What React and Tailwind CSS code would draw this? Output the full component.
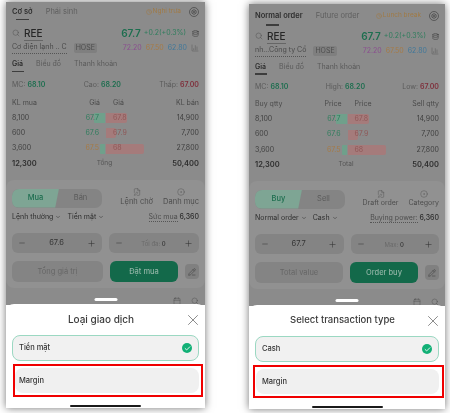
import React from "react";
import { Search, Database, ChartColumn, X, Check, Clock, ChevronDown, Minus, Plus, FilePen, CircleDot, PencilLine, Calendar } from "lucide-react";

const font = { fontFamily: "Inter, 'Noto Sans', sans-serif" };

const vi = {
  wrap: "mt-[2px] w-[199px] h-[406px]",
  top: "h-[303px]",
  head: "h-[17px] pb-[2px]",
  symbol: "mt-[5px]",
  bookGap: "mt-[8px]",
  tabs: ["Cơ sở", "Phái sinh"],
  underline: "ml-[10px] w-[13px]",
  session: "Nghỉ trưa",
  name: "Cơ điện lạnh .. C",
  high: "Cao:",
  low: "Thấp:",
  buyQty: "KL mua",
  price: "Giá",
  sellQty: "KL bán",
  total: "Tổng",
  buy: "Mua",
  sell: "Bán",
  draft: "Lệnh chờ",
  category: "Danh mục",
  actions: "text-[7.5px]",
  orderType: "Lệnh thường",
  cash: "Tiền mặt",
  power: "Sức mua",
  priceValue: "67.6",
  max: "Tối đa:",
  totalValue: "Tổng giá trị",
  submit: "Đặt mua",
  sheetTitle: "Loại giao dịch",
  title: "text-[10px]",
  redBox: "ml-[1px] mr-[-4px] pl-0 pr-[2px]",
  marginPad: "px-[4px]",
};

const en = {
  wrap: "mt-[4px] ml-[44px] w-[196px] h-[405px]",
  top: "h-[302px]",
  head: "h-[21px] pb-[3px]",
  symbol: "mt-[3px]",
  bookGap: "mt-[7px]",
  tabs: ["Normal order", "Future order"],
  underline: "ml-[17px] w-[13px]",
  session: "Lunch break",
  name: "nh...Công ty Cổ",
  high: "High:",
  low: "Low:",
  buyQty: "Buy qtty",
  price: "Price",
  sellQty: "Sell qtty",
  total: "Total",
  buy: "Buy",
  sell: "Sell",
  draft: "Draft order",
  category: "Category",
  actions: "text-[7px]",
  orderType: "Normal order",
  cash: "Cash",
  power: "Buying power:",
  priceValue: "67.7",
  max: "Max:",
  totalValue: "Total value",
  submit: "Order buy",
  sheetTitle: "Select transaction type",
  title: "text-[9.5px]",
  redBox: "ml-[-2px] mr-[-5px] pl-[1px] pr-[3px]",
  marginPad: "px-[6px]",
};

const rows = [
  { buy: "8,100", bid: "67.7", bidBar: 11, ask: "67.8", askBar: 21, sell: "14,900", bidColor: "text-[#2f7d5d]" },
  { buy: "600", bid: "67.6", bidBar: 0, ask: "67.9", askBar: 10, sell: "7,700", bidColor: "text-[#2f7d5d]" },
  { buy: "3,600", bid: "67.5", bidBar: 5, ask: "68", askBar: 38, sell: "27,800", bidColor: "text-[#a67a45]" },
];

function GearRing() {
  return (
    <svg width="10" height="10" viewBox="0 0 10 10" fill="none" stroke="#444444" strokeWidth="0.7">
      <circle cx="5" cy="5" r="4.5" />
      <path d="M5 2.6 7.1 3.8V6.2L5 7.4 2.9 6.2V3.8Z" />
      <circle cx="5" cy="5" r="0.8" />
    </svg>
  );
}

function BookRow({ row }) {
  return (
    <div className="flex h-[15.3px] items-center justify-between px-[6px] text-[7px] text-[#3f3f3f]">
      <span className="w-[40px]">{row.buy}</span>
      <div className="grid w-[80px] grid-cols-2 gap-x-[1px]">
        <div className="relative flex h-[10px] items-center justify-end pr-[6px]">
          <div className="absolute right-0 top-0 h-full rounded-l-[1px] bg-[#6fa08b]" style={{ width: row.bidBar }} />
          <span className={`relative ${row.bidColor}`}>{row.bid}</span>
        </div>
        <div className="relative flex h-[10px] items-center pl-[7px]">
          <div className="absolute left-0 top-0 h-full rounded-r-[2px] bg-[#a57b7b]" style={{ width: row.askBar }} />
          <span className="relative text-[#8f5757]">{row.ask}</span>
        </div>
      </div>
      <span className="w-[40px] text-right">{row.sell}</span>
    </div>
  );
}

function Stepper({ children }) {
  return (
    <div className="flex h-[20px] items-center justify-between rounded-[6px] bg-[#848484] px-[6px] text-[#333333]">
      <Minus size={8} strokeWidth={1.5} />
      {children}
      <Plus size={9} strokeWidth={1.5} />
    </div>
  );
}

function Phone({ t }) {
  return (
    <div className={`flex flex-col overflow-hidden bg-white shadow-[0_0_8px_rgba(0,0,0,0.55)] blur-[0.3px] ${t.wrap}`} style={font}>
      <div className={`relative flex flex-col overflow-hidden bg-[#8b8b8b] ${t.top}`}>
        {/* header tabs */}
        <div className={`flex items-end justify-between px-[6px] ${t.head}`}>
          <div className="flex gap-[13px] text-[7.5px]">
            <span className="font-semibold text-[#2e2e2e]">{t.tabs[0]}</span>
            <span className="text-[#5e5e5e]">{t.tabs[1]}</span>
          </div>
          <div className="flex items-center gap-[8px]">
            <div className="flex items-center gap-[1px] text-[6.5px] text-[#a07a45]">
              <Clock size={6} />
              <span>{t.session}</span>
            </div>
            <GearRing />
          </div>
        </div>
        <div className={`h-[1.5px] bg-[#3d3d3d] ${t.underline}`} />

        {/* symbol */}
        <div className={`flex h-[16px] items-center justify-between px-[6px] ${t.symbol}`}>
          <div className="flex items-center gap-[4px]">
            <Search size={8} strokeWidth={1.3} className="text-[#4a4a4a]" />
            <span className="border-b border-[#666666] text-[10px] font-medium leading-[14px] text-[#262626]">REE</span>
          </div>
          <div className="flex items-center gap-[3px]">
            <span className="text-[10px] font-semibold text-[#1d6e4f]">67.7</span>
            <span className="text-[7px] text-[#2f7d5d]">+0.2(+0.3%)</span>
            <Database size={7} className="ml-[3px] text-[#3f3f3f]" />
          </div>
        </div>
        <div className="mt-[1px] flex h-[12px] items-center justify-between px-[6px]">
          <div className="flex items-center gap-[7px] text-[7px]">
            <span className="border-b border-dotted border-[#555555] text-[#4a4a4a]">{t.name}</span>
            <span className="rounded-[2px] bg-[#7f7f7f] px-[2px] text-[#4d4d4d]">HOSE</span>
          </div>
          <div className="flex items-center gap-[4px] text-[7px]">
            <span className="text-[#8a4f8f]">72.20</span>
            <span className="text-[#a67a45]">67.50</span>
            <span className="text-[#41789a]">62.80</span>
            <ChartColumn size={8} strokeWidth={1} className="text-[#3f3f3f]" />
          </div>
        </div>

        {/* sub tabs */}
        <div className="mt-[4px] flex h-[13px] items-center gap-[13px] px-[6px] text-[7px]">
          <span className="font-semibold text-[#2e2e2e]">Giá</span>
          <span className="text-[#5a5a5a]">Biểu đồ</span>
          <span className="text-[#5a5a5a]">Thanh khoản</span>
        </div>
        <div className="ml-[6px] h-[1.5px] w-[12px] bg-[#3d3d3d]" />

        {/* stats */}
        <div className="mt-[8px] flex h-[10px] items-center justify-between px-[6px] text-[7px] text-[#5a5a5a]">
          <span>MC: <b className="font-semibold text-[#1d6e4f]">68.10</b></span>
          <span>{t.high} <b className="font-semibold text-[#1d6e4f]">68.20</b></span>
          <span>{t.low} <b className="font-semibold text-[#7f2f3b]">67.00</b></span>
        </div>

        {/* order book */}
        <div className={`flex h-[10px] items-center justify-between px-[6px] text-[7px] text-[#4a4a4a] ${t.bookGap}`}>
          <span className="w-[40px]">{t.buyQty}</span>
          <div className="grid w-[80px] grid-cols-2 gap-x-[1px]">
            <span className="pr-[5px] text-right">{t.price}</span>
            <span className="pl-[7px]">{t.price}</span>
          </div>
          <span className="w-[40px] text-right">{t.sellQty}</span>
        </div>
        <div className="mt-[2px] flex flex-col">
          {rows.map((row) => (
            <BookRow key={row.buy} row={row} />
          ))}
        </div>
        <div className="flex h-[15px] items-center justify-between px-[6px] text-[7.5px] font-semibold text-[#2e2e2e]">
          <span>12,300</span>
          <span className="text-[6.5px] font-normal text-[#555555]">{t.total}</span>
          <span>50,400</span>
        </div>

        {/* order form */}
        <div className="mt-[9px] h-[108px] shrink-0 rounded-[8px] bg-[#919191] px-[6px] pt-[8px]">
          <div className="flex h-[20px] items-center justify-between">
            <div className="flex h-[19px] w-[90px] overflow-hidden rounded-[7px] bg-[#848484] text-[7.5px]">
              <div className="flex w-[47px] items-center justify-center bg-[#7ea594] font-medium text-[#1d6e4f] [clip-path:polygon(0_0,100%_0,92%_100%,0_100%)]">
                {t.buy}
              </div>
              <div className="flex flex-1 items-center justify-center text-[#5a5a5a]">{t.sell}</div>
            </div>
            <div className={`flex gap-[10px] text-[#4d4d4d] ${t.actions}`}>
              <div className="flex flex-col items-center">
                <FilePen size={8} strokeWidth={1.2} />
                <span>{t.draft}</span>
              </div>
              <div className="flex flex-col items-center">
                <CircleDot size={8} strokeWidth={1.2} />
                <span>{t.category}</span>
              </div>
            </div>
          </div>
          <div className="mt-[1px] flex h-[16px] items-center justify-between text-[7px] text-[#2e2e2e]">
            <div className="flex items-center gap-[6px]">
              <span className="flex items-center gap-[2px]">{t.orderType}<ChevronDown size={6} /></span>
              <span className="flex items-center gap-[2px]">{t.cash}<ChevronDown size={6} /></span>
            </div>
            <span>
              <span className="border-b border-dotted border-[#555555] text-[#4d4d4d]">{t.power}</span>{" "}
              <b className="font-medium">6,360</b>
            </span>
          </div>
          <div className="mt-[8px] grid grid-cols-2 gap-[7px]">
            <Stepper>
              <span className="text-[7.5px]">{t.priceValue}</span>
            </Stepper>
            <Stepper>
              <span className="text-[6px] text-[#6a6a6a]">
                {t.max} <b className="font-medium text-[#333333]">0</b>
              </span>
            </Stepper>
          </div>
          <div className="mt-[8px] flex items-center gap-[7px]">
            <div className="flex h-[21px] flex-1 items-center justify-center rounded-[6px] bg-[#848484] text-[7.5px] text-[#666666]">
              {t.totalValue}
            </div>
            <div className="flex h-[21px] w-[68px] items-center justify-center rounded-[6px] bg-[#13694a] text-[7.5px] font-medium text-[#8fb3a4]">
              {t.submit}
            </div>
            <div className="flex h-[15px] w-[14px] items-center justify-center rounded-[4px] bg-[#808080]">
              <PencilLine size={8} className="text-[#4a4a4a]" />
            </div>
          </div>
        </div>

        {/* next section just showing above the sheet */}
        <div className="mt-[9px] flex justify-end gap-[10px] px-[6px] text-[#4a4a4a]">
          <Calendar size={8} strokeWidth={1.2} />
          <Search size={8} strokeWidth={1.2} />
        </div>

        <div className="absolute bottom-[4px] left-1/2 h-[3px] w-[23px] -translate-x-1/2 rounded-full bg-white" />
      </div>

      {/* bottom sheet */}
      <div className="relative -mt-[1px] flex flex-1 flex-col rounded-t-[8px] bg-white px-[6px]">
        <div className={`flex h-[31px] items-center justify-center pr-[9px] font-medium text-[#3a3a3a] ${t.title}`}>
          {t.sheetTitle}
        </div>
        <X size={18} strokeWidth={0.9} className="absolute right-[3.5px] top-[7px] text-[#555555]" />
        <div className="flex h-[26px] items-center justify-between rounded-[8px] border border-[#9bd8c2] bg-[#f1f1f1] px-[6px] text-[7.5px] font-medium text-[#333333]">
          <span>{t.cash}</span>
          <span className="flex h-[10px] w-[10px] items-center justify-center rounded-full bg-[#12b076]">
            <Check size={7} strokeWidth={3} className="text-white" />
          </span>
        </div>
        <div className={`mt-[3px] border-2 border-[#f00000] py-[2px] ${t.redBox}`}>
          <div className={`flex h-[25px] items-center rounded-[8px] bg-[#f0f0f0] text-[7.5px] font-medium text-[#333333] ${t.marginPad}`}>
            Margin
          </div>
        </div>
        <div className="mx-auto mt-[8px] h-[2px] w-[71px] rounded-full bg-[#1a1a1a]" />
      </div>
    </div>
  );
}

export default function App() {
  return (
    <div className="flex h-[413px] w-[450px] items-start overflow-hidden bg-white pl-[6px]">
      <Phone t={vi} />
      <Phone t={en} />
    </div>
  );
}
